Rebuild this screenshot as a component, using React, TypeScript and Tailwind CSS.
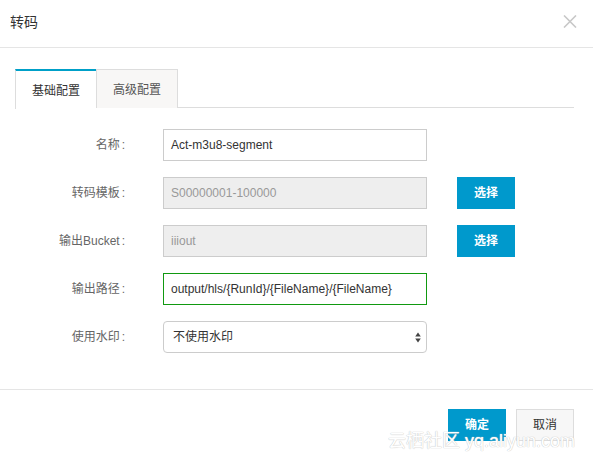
import React from "react";

const font = { fontFamily: '"Liberation Sans", "Noto Sans CJK SC", sans-serif' };

function Label({ children }: { children: React.ReactNode }) {
  return (
    <div className="w-[126px] shrink-0 text-right text-[12px] text-[#666] pr-[1px]">
      {children}
      <span className="ml-[2px]">:</span>
    </div>
  );
}

function Row({ label, children }: { label: string; children: React.ReactNode }) {
  return (
    <div className="flex items-center h-[32px]">
      <Label>{label}</Label>
      <div className="ml-[37px] flex items-center">{children}</div>
    </div>
  );
}

export default function App() {
  return (
    <div className="relative w-[593px] h-[459px] bg-white overflow-hidden" style={font}>
      {/* header */}
      <div className="h-[48px] border-b border-[#e5e5e5] flex items-center justify-between pl-[10px] pr-[16px]">
        <div className="text-[14px] text-[#333] mt-[-2px]">转码</div>
        <svg width="14" height="13" viewBox="0 0 14 13" className="mt-[-4px]">
          <path d="M1 0.5 L13 12.5 M13 0.5 L1 12.5" stroke="#c8c8c8" strokeWidth="1.6" />
        </svg>
      </div>

      {/* body */}
      <div className="pl-[15px] pr-[19px] pt-[21px] pb-[36px] border-b border-[#e5e5e5]">
        {/* tabs */}
        <div className="flex h-[39px] border-b border-[#dddddd]">
          <div className="w-[81px] h-[40px] bg-white border-t-2 border-t-[#00a0c8] border-l border-l-[#dddddd] flex items-center justify-center text-[12px] text-[#333] pt-[1px]">
            基础配置
          </div>
          <div className="w-[82px] h-[39px] bg-[#f8f7f6] border border-[#dddddd] border-b-0 flex items-center justify-center text-[12px] text-[#555] pt-[1px]">
            高级配置
          </div>
        </div>

        {/* form */}
        <div className="mt-[21px] flex flex-col gap-[16px] ml-[-15px]">
          <Row label="名称">
            <div className="w-[264px] h-[32px] border border-[#cccccc] bg-white flex items-center px-[7px] text-[12px] text-[#333]">
              Act-m3u8-segment
            </div>
          </Row>
          <Row label="转码模板">
            <div className="w-[264px] h-[32px] border border-[#cccccc] bg-[#eeeeee] flex items-center px-[7px] text-[12px] text-[#999]">
              S00000001-100000
            </div>
            <button className="ml-[30px] w-[58px] h-[32px] bg-[#0099cc] text-white text-[12px] font-bold">选择</button>
          </Row>
          <Row label="输出Bucket">
            <div className="w-[264px] h-[32px] border border-[#cccccc] bg-[#eeeeee] flex items-center px-[7px] text-[12px] text-[#999]">
              iiiout
            </div>
            <button className="ml-[30px] w-[58px] h-[32px] bg-[#0099cc] text-white text-[12px] font-bold">选择</button>
          </Row>
          <Row label="输出路径">
            <div className="w-[264px] h-[32px] border border-[#119911] bg-white flex items-center px-[7px] text-[12px] text-[#333]">
              output/hls/{"{RunId}"}/{"{FileName}"}/{"{FileName}"}
            </div>
          </Row>
          <Row label="使用水印">
            <div className="w-[264px] h-[32px] border border-[#cccccc] rounded-[4px] bg-white flex items-center justify-between pl-[9px] pr-[5px] text-[12px] text-[#333]">
              <span>不使用水印</span>
              <svg width="6" height="11" viewBox="0 0 6 11">
                <path d="M3 0.5 L5.8 4.5 L0.2 4.5 Z" fill="#444" />
                <path d="M3 10.5 L5.8 6.5 L0.2 6.5 Z" fill="#444" />
              </svg>
            </div>
          </Row>
        </div>
      </div>

      {/* footer */}
      <div className="flex justify-end pt-[19px] pr-[19px] gap-[10px]">
        <button className="w-[58px] h-[32px] bg-[#0099cc] text-white text-[12px] font-bold">确定</button>
        <button className="w-[58px] h-[32px] bg-[#f7f7f7] border border-[#dddddd] text-[#333] text-[12px]">取消</button>
      </div>

      {/* watermark */}
      <div
        className="absolute left-[388px] top-[428px] text-[18px] text-white whitespace-nowrap pointer-events-none"
        style={{ textShadow: "0 0 1px #c8c8c8, 0 0 1px #c8c8c8" }}
      >
        云栖社区 yq.aliyun.com
      </div>
    </div>
  );
}
